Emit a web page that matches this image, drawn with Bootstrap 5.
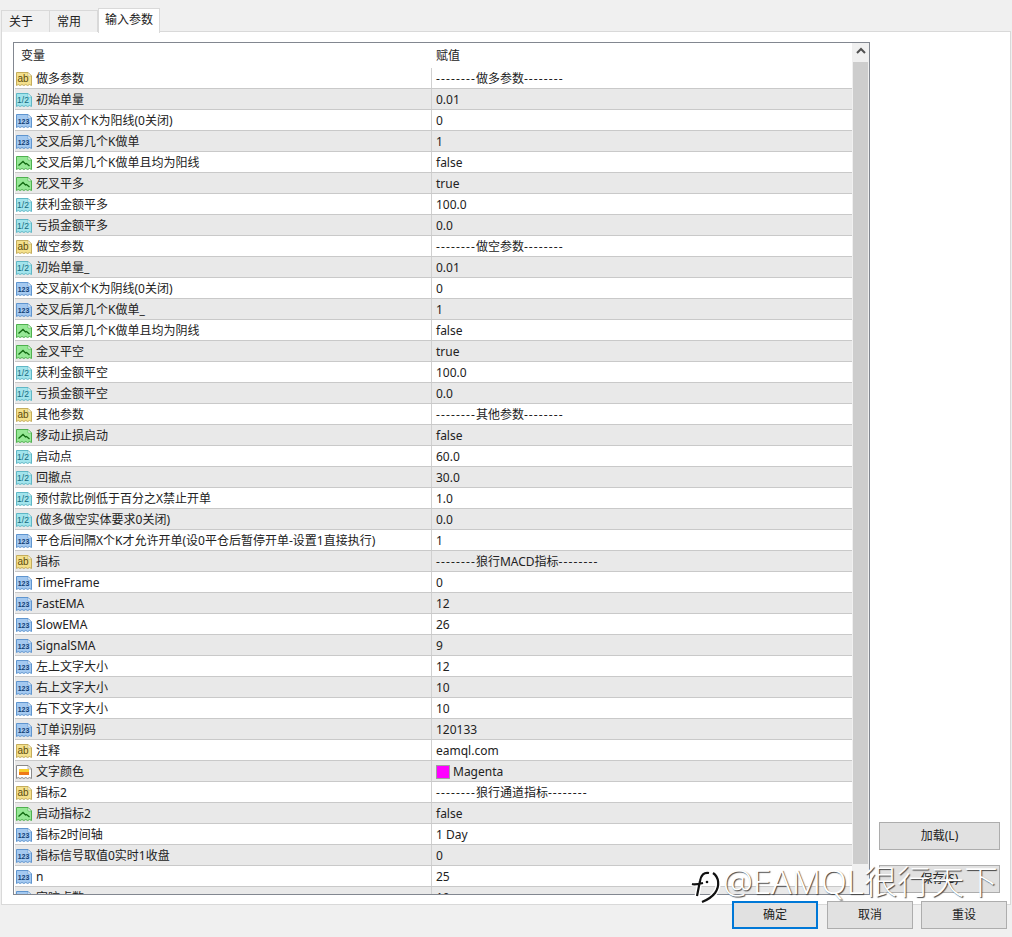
<!DOCTYPE html>
<html lang="zh">
<head>
    <meta charset="UTF-8">
    <title>输入参数</title>
    <link href="https://cdn.jsdelivr.net/npm/bootstrap@5.3.0/dist/css/bootstrap.min.css" rel="stylesheet">
    <style>
        html, body {
            height: 937px;
            overflow: hidden;
        }
        body {
            background-color: #f0f0f0;
            color: #222;
            font-family: "Noto Sans", "Noto Sans CJK SC", sans-serif;
            font-size: 12px;
            line-height: 20px;
            position: relative;
        }
        .tab-strip {
            height: 32px;
            padding: 8px 0 0 1px;
        }
        .tab-item {
            background: #f0f0f0;
            border: 1px solid #d9d9d9;
            border-bottom: 0;
            height: 22px;
            padding: 1px 16px 0 7px;
            margin-top: 2px;
            margin-right: -1px;
        }
        .tab-item.on {
            background: #fff;
            height: 25px;
            margin-top: 0;
            margin-left: 1px;
            padding: 1px 6px 0;
            position: relative;
            z-index: 1;
        }
        .tab-panel {
            background: #fff;
            border: 1px solid #d9d9d9;
            height: 874px;
            margin: -1px 1px 0 1px;
            padding: 10px 10px 9px 11px;
        }
        .param-frame {
            width: 857px;
            height: 853px;
            border: 1px solid #828790;
            overflow: hidden;
            flex: none;
        }
        .param-list {
            width: 838px;
            flex: none;
            overflow: hidden;
        }
        .head-row {
            height: 25px;
            padding-top: 3px;
        }
        .param-row {
            height: 21px;
            margin-left: 1px;
            border-bottom: 1px solid #c9c9c9;
        }
        .param-row:nth-child(even) {
            background: #e9e9e9;
        }
        .name-cell {
            width: 417px;
            flex: none;
            padding-left: 1px;
            border-right: 1px solid #d0d0d0;
            white-space: nowrap;
        }
        .param-row .name-cell,
        .param-row .value-cell {
            padding-top: 2px;
        }
        .head-row .name-cell {
            width: 418px;
            padding-left: 7px;
            border-right: 0;
        }
        .value-cell {
            padding-left: 4px;
            white-space: nowrap;
        }
        .dash-run {
            letter-spacing: 1.12px;
        }
        .type-icon {
            width: 16px;
            height: 16px;
            margin-right: 4px;
            flex: none;
        }
        .swatch {
            width: 14px;
            height: 14px;
            background: #f0f;
            border: 1px solid #a0a0a0;
            margin-right: 3px;
        }
        .scroll-track {
            width: 17px;
            background: #f0f0f0;
            flex: none;
        }
        .scroll-up {
            height: 19px;
            padding-top: 4px;
        }
        .scroll-thumb {
            background: #cdcdcd;
            height: 802px;
            margin: 0 1px;
        }
        .side-col {
            width: 121px;
            margin-left: 9px;
            gap: 15px;
            padding-bottom: 2px;
        }
        .win-btn {
            background: #e1e1e1;
            border: 1px solid #adadad;
            border-radius: 0;
            color: #222;
            font-size: 12px;
            line-height: 20px;
            padding: 0;
            height: 28px;
        }
        .foot-bar {
            padding: 0 5px 0 0;
            margin-top: -4px;
            gap: 8px;
        }
        .foot-bar .win-btn {
            width: 86px;
        }
        .foot-bar .win-btn.primary-btn {
            border: 2px solid #0078d7;
            margin-right: 1px;
        }
        .water-mark {
            position: absolute;
            left: 723px;
            top: 861px;
            color: #fff;
            font-family: "Noto Sans", "Noto Sans CJK SC", sans-serif;
            font-size: 33.5px;
            font-weight: 300;
            line-height: 40px;
            white-space: nowrap;
            text-shadow: 1px 1px 1px #444;
        }
        .water-logo {
            position: absolute;
            left: 690px;
            top: 866px;
        }
    </style>
</head>
<body>

<svg width="0" height="0" class="position-absolute">
    <defs>
        <symbol id="sheet" viewBox="0 0 16 16">
            <path d="M.5 1.5h11.5l3.5 3.5v9.5l-1.9-1-1.9 1-1.9-1-1.9 1-1.9-1-1.9 1-1.9-1-1.7 1z"/>
        </symbol>
    </defs>
</svg>

<div class="tab-strip d-flex">
    <div class="tab-item">关于</div>
    <div class="tab-item">常用</div>
    <div class="tab-item on">输入参数</div>
</div>

<div class="tab-panel d-flex">
    <div class="param-frame d-flex">
        <div class="param-list">
            <div class="head-row d-flex">
                <div class="name-cell">变量</div>
                <div class="value-cell">赋值</div>
            </div>
            <div id="rows"></div>
        </div>
        <div class="scroll-track">
            <div class="scroll-up d-flex justify-content-center">
                <svg width="10" height="7" viewBox="0 0 10 7"><path d="M1 6l4-4 4 4" fill="none" stroke="#505050" stroke-width="2"/></svg>
            </div>
            <div class="scroll-thumb"></div>
        </div>
    </div>
    <div class="side-col d-flex flex-column justify-content-end">
        <button class="btn win-btn" type="button">加载(L)</button>
        <button class="btn win-btn" type="button">保存(S)</button>
    </div>
</div>

<div class="foot-bar d-flex justify-content-end align-items-start position-relative">
    <button class="btn win-btn primary-btn" type="button">确定</button>
    <button class="btn win-btn" type="button">取消</button>
    <button class="btn win-btn" type="button">重设</button>
</div>

<svg class="water-logo" width="32" height="38" viewBox="0 0 32 38">
    <path d="M19 7c-5-1-8 2-9 8l-3 15M2 18c3 1 7 0 11-1M23 7c6 4 7 13 2 20-3 4-8 7-13 9" fill="none" stroke="#fff" stroke-width="5"/>
    <path d="M19 7c-5-1-8 2-9 8l-3 15M2 18c3 1 7 0 11-1M23 7c6 4 7 13 2 20-3 4-8 7-13 9" fill="none" stroke="#111" stroke-width="2.2"/>
    <circle cx="17" cy="16" r="1.3" fill="#111"/>
</svg>
<div class="water-mark">@EAMQL很行天下</div>

<script>
    // t: 字符串 ab, 小数 half, 整数 int, 布尔 bool, 颜色 color
    const params = [
        ["ab", "做多参数", "--------做多参数--------"],
        ["half", "初始单量", "0.01"],
        ["int", "交叉前X个K为阳线(0关闭)", "0"],
        ["int", "交叉后第几个K做单", "1"],
        ["bool", "交叉后第几个K做单且均为阳线", "false"],
        ["bool", "死叉平多", "true"],
        ["half", "获利金额平多", "100.0"],
        ["half", "亏损金额平多", "0.0"],
        ["ab", "做空参数", "--------做空参数--------"],
        ["half", "初始单量_", "0.01"],
        ["int", "交叉前X个K为阴线(0关闭)", "0"],
        ["int", "交叉后第几个K做单_", "1"],
        ["bool", "交叉后第几个K做单且均为阴线", "false"],
        ["bool", "金叉平空", "true"],
        ["half", "获利金额平空", "100.0"],
        ["half", "亏损金额平空", "0.0"],
        ["ab", "其他参数", "--------其他参数--------"],
        ["bool", "移动止损启动", "false"],
        ["half", "启动点", "60.0"],
        ["half", "回撤点", "30.0"],
        ["half", "预付款比例低于百分之X禁止开单", "1.0"],
        ["half", "(做多做空实体要求0关闭)", "0.0"],
        ["int", "平仓后间隔X个K才允许开单(设0平仓后暂停开单-设置1直接执行)", "1"],
        ["ab", "指标", "--------狼行MACD指标--------"],
        ["int", "TimeFrame", "0"],
        ["int", "FastEMA", "12"],
        ["int", "SlowEMA", "26"],
        ["int", "SignalSMA", "9"],
        ["int", "左上文字大小", "12"],
        ["int", "右上文字大小", "10"],
        ["int", "右下文字大小", "10"],
        ["int", "订单识别码", "120133"],
        ["ab", "注释", "eamql.com"],
        ["color", "文字颜色", "Magenta"],
        ["ab", "指标2", "--------狼行通道指标--------"],
        ["bool", "启动指标2", "false"],
        ["int", "指标2时间轴", "1 Day"],
        ["int", "指标信号取值0实时1收盘", "0"],
        ["int", "n", "25"],
        ["int", "容咬点数", "10"]
    ];

    const skins = {
        ab: ["#f4e08c", "#c4ad5c"],
        half: ["#a2e4ec", "#5fb7c6"],
        int: ["#a4c9f0", "#5f95cf"],
        bool: ["#96e896", "#4fb04f"],
        color: ["#fff", "#8a8a8a"]
    };

    function icon(type) {
        const [fill, line] = skins[type];
        let inner = "";
        if (type === "ab") {
            inner = '<text x="7" y="11" font-size="10" text-anchor="middle" fill="#5c4c0c" font-family="Liberation Sans">ab</text>';
        } else if (type === "half") {
            inner = '<text x="7" y="11" font-size="8.5" text-anchor="middle" fill="#14697d" font-family="Liberation Sans">1/2</text>';
        } else if (type === "int") {
            inner = '<text x="7.5" y="11" font-size="7" font-weight="700" text-anchor="middle" fill="#123f75" font-family="Liberation Sans">123</text>';
        } else if (type === "bool") {
            inner = '<path d="M2.5 10.5L7 6.5l2.5 2.5 1-.5 3 2.5" fill="none" stroke="#126a12" stroke-width="1.3"/>';
        } else {
            inner = '<rect x="3" y="5" width="10" height="3" fill="#f6cf30"/><rect x="3" y="8" width="10" height="3" fill="#ef7a18"/>';
        }
        const fold = '<path d="M12 1.5v3.5h3.5z" fill="#fff" stroke="' + line + '" stroke-width=".6"/>';
        return `<svg class="type-icon" viewBox="0 0 16 16"><use href="#sheet" fill="${fill}" stroke="${line}"/>${fold}${inner}</svg>`;
    }

    function dashed(text) {
        return text.replace(/-{8}/g, '<span class="dash-run">--------</span>');
    }

    document.getElementById("rows").innerHTML = params.map(([type, name, value]) => {
        const swatch = type === "color" ? '<span class="swatch"></span>' : "";
        return `<div class="param-row d-flex">
            <div class="name-cell d-flex align-items-center">${icon(type)}<span>${name}</span></div>
            <div class="value-cell d-flex align-items-center">${swatch}<span>${dashed(value)}</span></div>
        </div>`;
    }).join("");
</script>

<script src="https://cdn.jsdelivr.net/npm/bootstrap@5.3.0/dist/js/bootstrap.bundle.min.js"></script>
</body>
</html>
